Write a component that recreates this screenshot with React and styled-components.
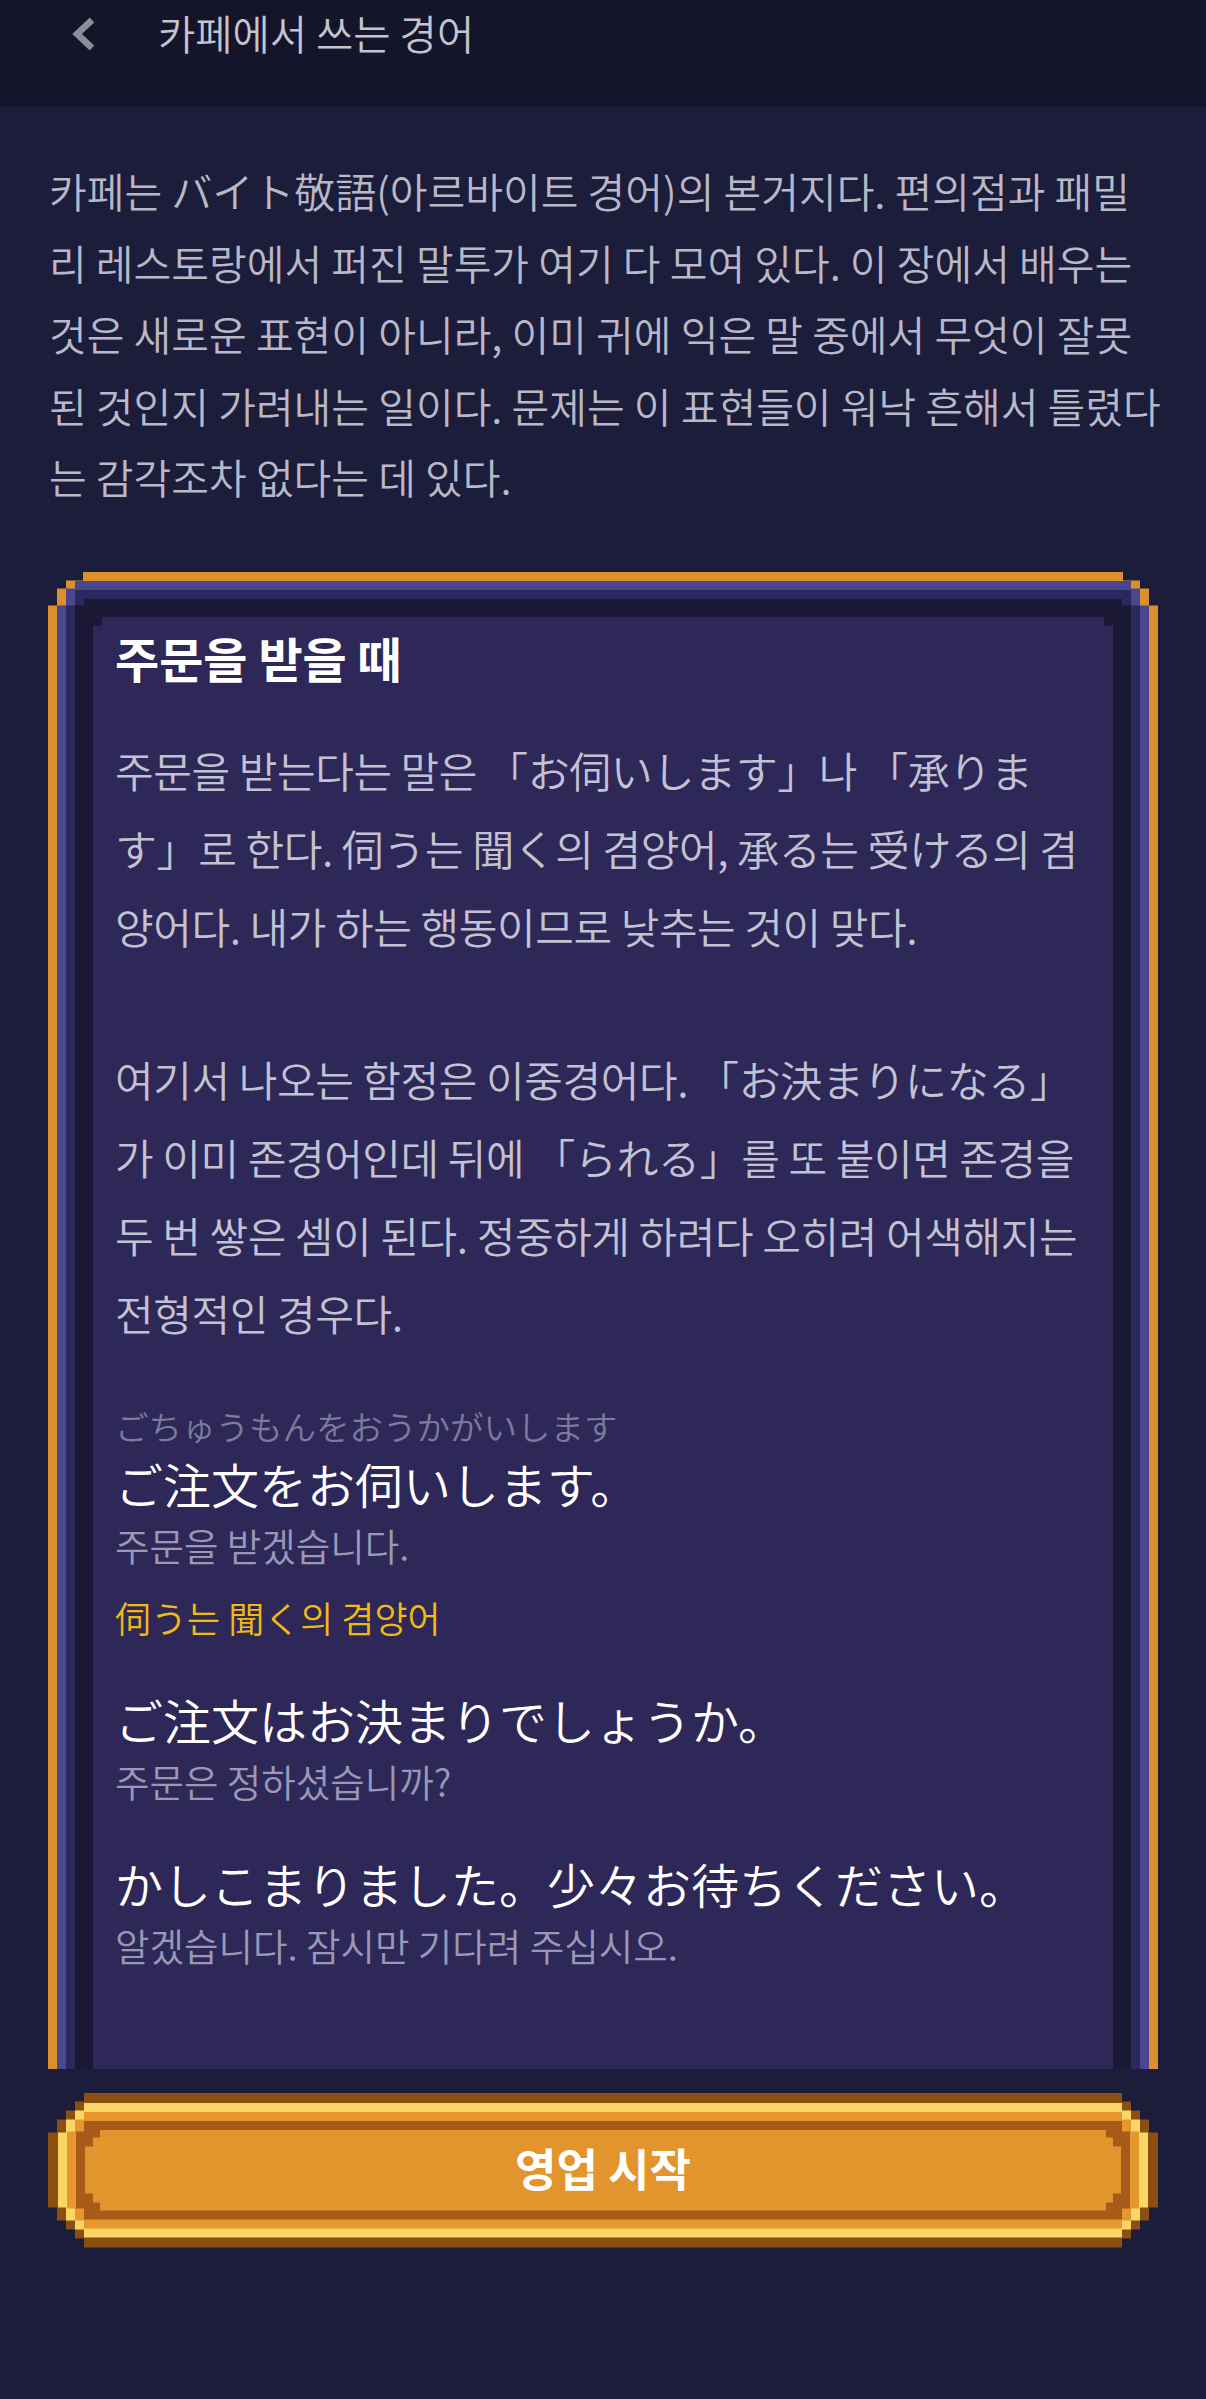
import React from 'react';
import styled, { createGlobalStyle } from 'styled-components';

const FONT = `"Noto Sans CJK KR", "Noto Sans CJK JP", "Noto Sans", sans-serif`;

const GlobalStyle = createGlobalStyle`
  html, body { margin: 0; padding: 0; background: #1c1d3b; }
  body { font-family: ${FONT}; }
  * { box-sizing: border-box; }
`;

// staircase corner polygon: pts from left edge to top edge (top-left corner), mirrored to all corners
const stair = (pts) => {
  const tl = pts.map(([x, y]) => `${x}px ${y}px`);
  const tr = [...pts].reverse().map(([x, y]) => `calc(100% - ${x}px) ${y}px`);
  const br = pts.map(([x, y]) => `calc(100% - ${x}px) calc(100% - ${y}px)`);
  const bl = [...pts].reverse().map(([x, y]) => `${x}px calc(100% - ${y}px)`);
  return `polygon(${[...tl, ...tr, ...br, ...bl].join(', ')})`;
};

const Page = styled.div`
  width: 1206px;
  min-height: 2399px;
  background: #1c1d3b;
  display: flex;
  flex-direction: column;
`;

const Header = styled.header`
  height: 107px;
  background: #14152a;
  display: flex;
  align-items: center;
  gap: 63px;
  padding: 0 0 40px 72px;
`;

const BackButton = styled.div`
  width: 23px;
  height: 34px;
  display: flex;
  svg { display: block; }
`;

const HeaderTitle = styled.h1`
  margin: 0;
  font-size: 40.5px;
  font-weight: 350;
  line-height: 1;
  color: #c4c4ce;
`;

const Intro = styled.p`
  margin: 0;
  padding: 48px 16px 0 49px;
  font-size: 41px;
  font-weight: 350;
  line-height: 71.5px;
  color: #b9b8c8;
`;

const CardViewport = styled.section`
  margin: 59px 48px 0;
  height: 1497px;
  overflow: hidden;
`;

const FrameBand = styled.div`
  padding: ${(p) => p.$pad}px;
  background: ${(p) => p.$bg};
  clip-path: ${(p) => stair(p.$corner)};
`;

const CardBody = styled.div`
  background: #2d2858;
  clip-path: ${stair([[0, 9], [9, 9], [9, 0]])};
  padding: 7px 8px 320px 22px;
`;

const CardTitle = styled.h2`
  margin: 0 0 40px;
  font-size: 48px;
  font-weight: 700;
  line-height: 67px;
  color: #ffffff;
`;

const Paragraph = styled.p`
  margin: ${(p) => (p.$first ? '0' : '75px')} 0 0;
  font-size: 42px;
  font-weight: 350;
  line-height: 78px;
  letter-spacing: -0.4px;
  color: #c3c2d2;
`;

const PhraseList = styled.div`
  margin-top: 50px;
  display: flex;
  flex-direction: column;
  gap: 42px;
`;

const PhraseGroup = styled.div`
  display: flex;
  flex-direction: column;
  font-weight: 350;
`;

const Reading = styled.div`
  font-size: 33.5px;
  line-height: 48px;
  color: #7d7a9d;
`;

const Japanese = styled.div`
  font-size: 48px;
  line-height: 66px;
  color: #ffffff;
`;

const Translation = styled.div`
  margin-top: 2px;
  font-size: 37.5px;
  line-height: 54px;
  color: #9a98b5;
`;

const Note = styled.div`
  margin-top: 18px;
  font-size: 36px;
  line-height: 54px;
  color: #f3b913;
`;

const StartButton = styled.button`
  margin: 24px 48px 0;
  padding: 10px;
  border: 0;
  background: #8b4f11;
  clip-path: ${stair([[0, 40], [9, 40], [9, 27], [18, 27], [18, 18], [27, 18], [27, 9], [36, 9], [36, 0]])};
  font-family: ${FONT};
  cursor: pointer;
  display: block;
`;

const ButtonBand = styled.div`
  padding: 9px;
  background: ${(p) => p.$bg};
  clip-path: ${(p) => stair(p.$corner)};
`;

const ButtonFace = styled.div`
  height: 81px;
  background: #e2952d;
  clip-path: ${stair([[0, 17], [8, 17], [8, 8], [15, 8], [15, 0]])};
  display: flex;
  align-items: center;
  justify-content: center;
  padding-bottom: 6px;
  font-size: 45px;
  font-weight: 700;
  color: #ffffff;
`;

const BackIcon = () => (
  <svg width="23" height="34" viewBox="0 0 23 34">
    <polyline points="20,3 5,17 20,31" fill="none" stroke="#8d8d98" strokeWidth="6.5" strokeLinejoin="miter" />
  </svg>
);

const phrases = [
  {
    reading: 'ごちゅうもんをおうかがいします',
    jp: 'ご注文をお伺いします。',
    tr: '주문을 받겠습니다.',
    note: '伺う는 聞く의 겸양어',
  },
  { jp: 'ご注文はお決まりでしょうか。', tr: '주문은 정하셨습니까?' },
  { jp: 'かしこまりました。少々お待ちください。', tr: '알겠습니다. 잠시만 기다려 주십시오.' },
];

export default function App() {
  return (
    <>
      <GlobalStyle />
      <Page>
        <Header>
          <BackButton>
            <BackIcon />
          </BackButton>
          <HeaderTitle>카페에서 쓰는 경어</HeaderTitle>
        </Header>

        <Intro>
          카페는 バイト敬語(아르바이트 경어)의 본거지다. 편의점과 패밀
          <br />
          리 레스토랑에서 퍼진 말투가 여기 다 모여 있다. 이 장에서 배우는
          <br />
          것은 새로운 표현이 아니라, 이미 귀에 익은 말 중에서 무엇이 잘못
          <br />
          된 것인지 가려내는 일이다. 문제는 이 표현들이 워낙 흔해서 틀렸다
          <br />
          는 감각조차 없다는 데 있다.
        </Intro>

        <CardViewport>
          <FrameBand $pad={9} $bg="#dd8f2c" $corner={[[0, 34], [9, 34], [9, 17], [18, 17], [18, 9], [35, 9], [35, 0]]}>
            <FrameBand $pad={9} $bg="#4a4791" $corner={[[0, 25], [9, 25], [9, 8], [18, 8], [18, 0]]}>
              <FrameBand $pad={9} $bg="#2b285d" $corner={[[0, 16], [9, 16], [9, 0]]}>
                <FrameBand $pad={18} $bg="#1b1836" $corner={[[0, 7], [9, 7], [9, 0]]}>
                  <CardBody>
                    <CardTitle>주문을 받을 때</CardTitle>
                    <Paragraph $first>
                      주문을 받는다는 말은 「お伺いします」나 「承りま
                      <br />
                      す」로 한다. 伺う는 聞く의 겸양어, 承る는 受ける의 겸
                      <br />
                      양어다. 내가 하는 행동이므로 낮추는 것이 맞다.
                    </Paragraph>
                    <Paragraph>
                      여기서 나오는 함정은 이중경어다. 「お決まりになる」
                      <br />
                      가 이미 존경어인데 뒤에 「られる」를 또 붙이면 존경을
                      <br />
                      두 번 쌓은 셈이 된다. 정중하게 하려다 오히려 어색해지는
                      <br />
                      전형적인 경우다.
                    </Paragraph>
                    <PhraseList>
                      {phrases.map((p) => (
                        <PhraseGroup key={p.jp}>
                          {p.reading && <Reading>{p.reading}</Reading>}
                          <Japanese>{p.jp}</Japanese>
                          <Translation>{p.tr}</Translation>
                          {p.note && <Note>{p.note}</Note>}
                        </PhraseGroup>
                      ))}
                    </PhraseList>
                  </CardBody>
                </FrameBand>
              </FrameBand>
            </FrameBand>
          </FrameBand>
        </CardViewport>

        <StartButton type="button">
          <ButtonBand $bg="#fad765" $corner={[[0, 30], [8, 30], [8, 17], [17, 17], [17, 8], [26, 8], [26, 0]]}>
            <ButtonBand $bg="#e6982e" $corner={[[0, 20], [8, 20], [8, 8], [17, 8], [17, 0]]}>
              <ButtonBand $bg="#a85b18" $corner={[[0, 11], [8, 11], [8, 0]]}>
                <ButtonFace>영업 시작</ButtonFace>
              </ButtonBand>
            </ButtonBand>
          </ButtonBand>
        </StartButton>
      </Page>
    </>
  );
}
